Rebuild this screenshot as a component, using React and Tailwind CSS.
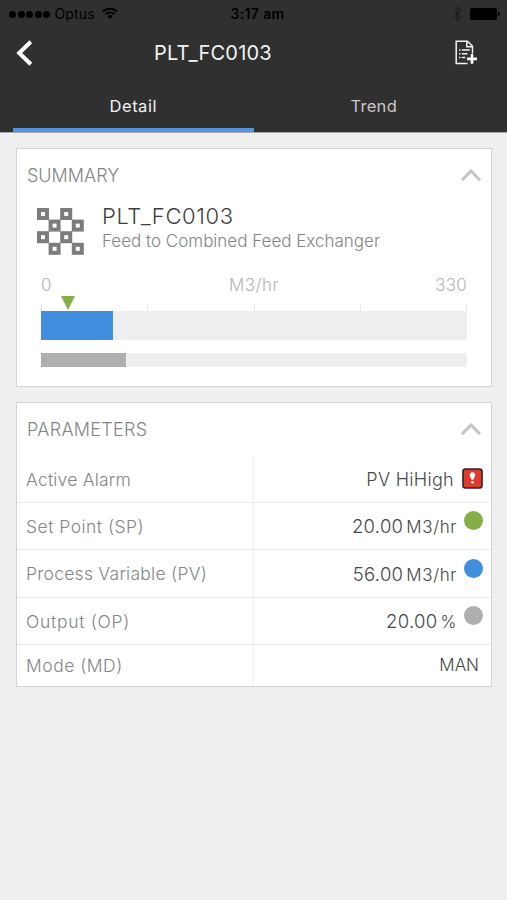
import React from 'react';

const CELLS = [[0, 0], [2, 0], [1, 1], [3, 1], [0, 2], [2, 2], [1, 3], [3, 3]];

const PARAMETERS = [
  { label: 'Active Alarm', labelClass: 'tracking-[0.2px]', value: 'PV HiHigh', alarm: true, height: 'h-[46px]' },
  { label: 'Set Point (SP)', labelClass: 'tracking-[0.48px]', value: '20.00', unit: 'M3/hr', dot: 'bg-[#86ae48]', height: 'h-[47px]' },
  { label: 'Process Variable (PV)', labelClass: 'tracking-[0.26px]', value: '56.00', unit: 'M3/hr', dot: 'bg-[#428ede]', height: 'h-[48px]' },
  { label: 'Output (OP)', labelClass: 'tracking-[0.7px]', value: '20.00', unit: '%', dot: 'bg-[#afafaf]', height: 'h-[47px]' },
  { label: 'Mode (MD)', labelClass: 'tracking-[0.5px]', value: 'MAN', height: 'h-[41px]' },
];

const StatusBar = () => (
  <div className="grid h-7 grid-cols-3 items-center pl-[9px] pr-[7px] text-[14px] leading-none text-black">
    <div className="flex items-center">
      <div className="flex gap-[1.6px]">
        {[0, 1, 2, 3, 4].map((i) => (
          <span key={i} className="size-[7px] rounded-full bg-black" />
        ))}
      </div>
      <span className="ml-1 tracking-[0.2px]">Optus</span>
      <svg className="ml-[7px] -mt-0.5" width="16" height="12" viewBox="0 0 16 12" fill="none" stroke="black" strokeWidth="2">
        <path d="M1 4.6a10 10 0 0 1 14 0" />
        <path d="M3.7 7.3a6.2 6.2 0 0 1 8.6 0" />
        <path d="M8 12 5.4 9.2a3.8 3.8 0 0 1 5.2 0z" fill="black" stroke="none" />
      </svg>
    </div>
    <div className="pl-1.5 text-center font-semibold tracking-[0.35px]">3:17 am</div>
    <div className="flex items-center justify-end">
      <svg width="10" height="16" viewBox="0 0 10 16" fill="none" stroke="#171717" strokeWidth="1">
        <path d="M1 4.5 9 11 5 15V1l4 4-8 6.5" />
      </svg>
      <span className="ml-2 h-3 w-[27px] rounded-[2px] bg-black" />
      <span className="ml-px h-1 w-[2px] rounded-r-full bg-black" />
    </div>
  </div>
);

const Header = () => (
  <header className="flex h-[133px] flex-col border-b border-[#a8a8a8] bg-[#303030]">
    <StatusBar />
    <div className="flex h-[50px] items-center pl-4 pr-[30px]">
      <button className="w-[138px]" aria-label="Back">
        <svg width="17" height="26" viewBox="0 0 17 26" fill="none" stroke="white" strokeWidth="4">
          <path d="M14.8 1.8 3.2 13l11.6 11.2" />
        </svg>
      </button>
      <h1 className="text-[20px] tracking-[0.2px] text-[#f2f2f2]">PLT_FC0103</h1>
      <button className="ml-auto" aria-label="Add note">
        <svg width="22" height="26" viewBox="0 0 22 26" fill="none" stroke="#f4f4f4" strokeWidth="1.5">
          <path d="M12.5 23.500H1.200V1.200h11.300l5 5v7.300" />
          <path d="M11.800 1.500v5.200h5.400" />
          <path d="M4 10h1.500M6.800 10h8M4 13.700h1.500M6.800 13.700h5.700M4 17.400h1.500M6.800 17.400h3.500" />
          <path d="M17 14v9.800M12 18.900h10" strokeWidth="2.6" stroke="white" />
        </svg>
      </button>
    </div>
    <nav className="grid flex-1 grid-cols-2 px-[13px] text-[16.5px]">
      <button className="border-b-4 border-[#5794e0] pt-[7px] tracking-[0.5px] text-[#f2f2f2]">Detail</button>
      <button className="border-b-4 border-transparent pt-[7px] tracking-[0.3px] text-[#c8c8c8]">Trend</button>
    </nav>
  </header>
);

const Card = ({ title, titleClass, className, children }) => (
  <section className={`border border-[#d4d4d4] bg-white ${className}`}>
    <div className="flex h-[54px] items-center justify-between px-[10px] pb-0.5">
      <h2 className={`text-[18px] font-light text-[#858585] ${titleClass}`}>{title}</h2>
      <svg width="20" height="12" viewBox="0 0 20 12" fill="none" stroke="#c6c6c6" strokeWidth="3">
        <path d="M1 11.2 10 2l9 9.2" />
      </svg>
    </div>
    {children}
  </section>
);

const AlarmIcon = () => (
  <svg width="21" height="21" viewBox="0 0 21 21">
    <rect x="1" y="1" width="19" height="19" rx="2.5" fill="#df3b2e" stroke="#35201f" strokeWidth="1.6" />
    <path d="M10.5 4.2a2.8 2.8 0 0 1 2.7 3.3c-.3 1.5-1.3 2.3-1.7 4.2h-2c-.4-1.9-1.4-2.7-1.7-4.2a2.8 2.8 0 0 1 2.7-3.3z" fill="white" />
    <circle cx="10.5" cy="14.3" r="1.3" fill="white" />
  </svg>
);

const Gauge = () => (
  <div className="mx-6 mt-[19px]">
    <div className="grid grid-cols-3 text-[17px] font-light leading-[22px] text-[#b4b4b4]">
      <span>0</span>
      <span className="text-center tracking-[0.5px]">M3/hr</span>
      <span className="text-right tracking-[0.2px]">330</span>
    </div>
    <div className="relative mt-2 flex h-[7px] justify-between">
      {[0, 1, 2, 3, 4].map((i) => (
        <span key={i} className="w-px bg-[#e8e8e8]" />
      ))}
      {/* Set point marker */}
      <svg className="absolute -top-2 left-5" width="14" height="14" viewBox="0 0 14 14" fill="#86ae48">
        <path d="M0 0h14L7 14z" />
      </svg>
    </div>
    <div className="h-[29px] bg-[#eee]">
      <div className="h-full w-[17%] bg-[#428ede]" />
    </div>
    <div className="mt-[13px] h-[14px] bg-[#eee]">
      <div className="h-full w-1/5 bg-[#afafaf]" />
    </div>
  </div>
);

const Summary = () => (
  <Card title="SUMMARY" className="h-[239px]">
    <div className="flex h-[52px] pl-5">
      <svg className="mt-[5px]" width="47" height="47" viewBox="0 0 47 47" fill="none" stroke="#7c7c7c" strokeWidth="4">
        {CELLS.map(([x, y]) => (
          <rect key={`${x}${y}`} x={2 + x * 11.6} y={2 + y * 11.6} width="8" height="8" />
        ))}
      </svg>
      <div className="-mt-px ml-[18px]">
        <h3 className="text-[22px] font-light leading-[28px] tracking-[0.6px] text-[#404040]">PLT_FC0103</h3>
        <p className="text-[17px] font-light leading-[22px] text-[#858585]">Feed to Combined Feed Exchanger</p>
      </div>
    </div>
    <Gauge />
  </Card>
);

const ParameterRow = ({ label, labelClass, value, unit, dot, alarm, height }) => (
  <div className={`flex border-b border-[#ebebeb] last:border-b-0 ${height}`}>
    <div className={`flex w-[237px] items-center border-r border-[#f0f0f0] pl-[9px] pt-0.5 text-[17.5px] font-light text-[#858585] ${labelClass}`}>
      {label}
    </div>
    <div className="flex flex-1 items-center justify-end pr-2 text-[#484848]">
      {unit ? (
        <span className="flex items-baseline pt-0.5 font-light">
          <span className="text-[18.5px] tracking-[0.3px]">{value}</span>
          <span className="ml-[3px] text-[17px] tracking-[0.6px]">{unit}</span>
        </span>
      ) : (
        <span className={alarm ? 'text-[18px] font-light tracking-[0.3px]' : 'mr-1 text-[17px] font-light'}>{value}</span>
      )}
      {alarm && <span className="-mt-0.5 ml-2"><AlarmIcon /></span>}
      {dot && <span className={`-mt-[11px] ml-[7px] size-[19px] rounded-full ${dot}`} />}
    </div>
  </div>
);

const App = () => (
  <div className="min-h-screen w-full bg-[#efefef] font-['Inter',sans-serif]">
    <Header />
    <main className="flex flex-col gap-[15px] pl-4 pr-[15px] pt-[15px]">
      <Summary />
      <Card title="PARAMETERS" titleClass="tracking-[0.3px]" className="h-[285px]">
        {PARAMETERS.map((p) => (
          <ParameterRow key={p.label} {...p} />
        ))}
      </Card>
    </main>
  </div>
);

export default App;
